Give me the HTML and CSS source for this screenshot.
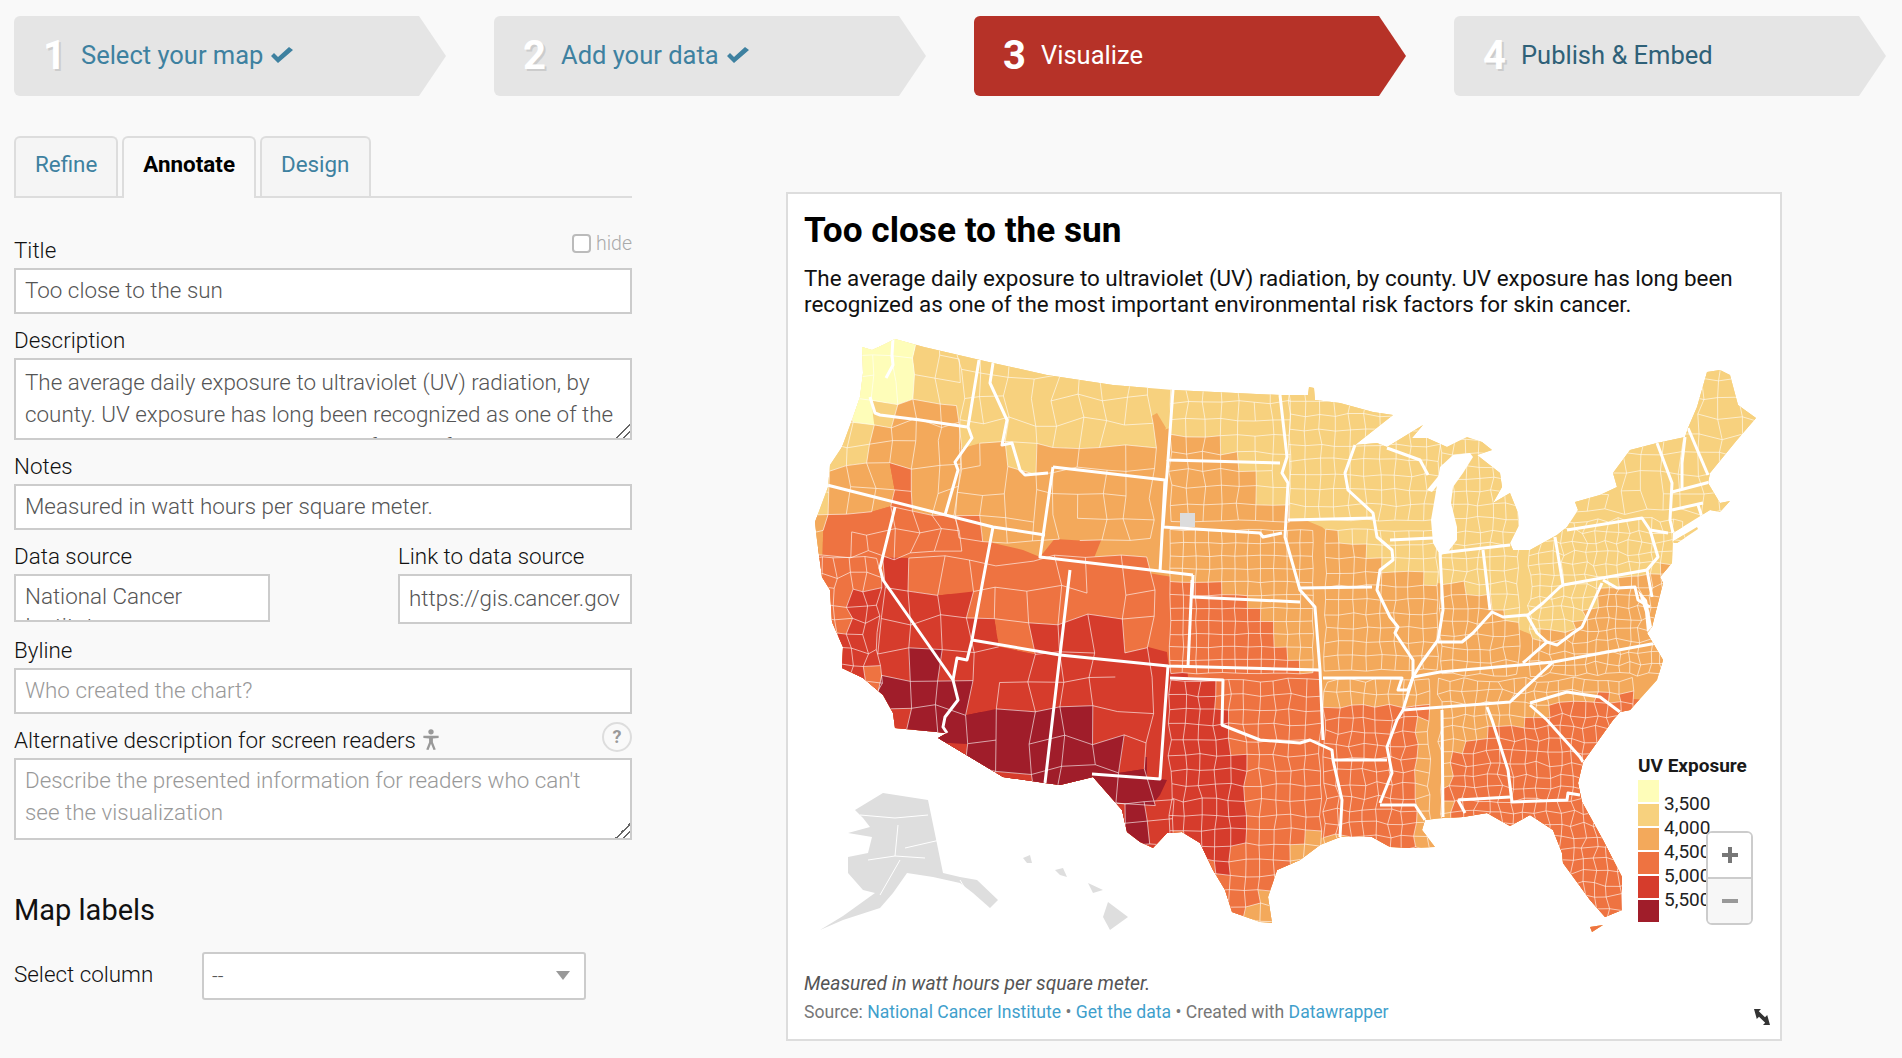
FILE: index.html
```html
<!DOCTYPE html>
<html lang="en">
<head>
    <meta charset="UTF-8">
    <title>Visualize - Too close to the sun</title>
    <link rel="stylesheet" href="styles.css">
</head>
<body>
    <div class="steps">
        <div class="step"><span class="step-num">1</span><span class="step-label">Select your map</span>
            <svg class="check" viewBox="0 0 22 16"><path d="M0 9l3-3 4 4 11-10 4 3-15 13z"/></svg></div>
        <div class="step"><span class="step-num">2</span><span class="step-label">Add your data</span>
            <svg class="check" viewBox="0 0 22 16"><path d="M0 9l3-3 4 4 11-10 4 3-15 13z"/></svg></div>
        <div class="step active"><span class="step-num">3</span><span class="step-label">Visualize</span></div>
        <div class="step next"><span class="step-num">4</span><span class="step-label">Publish &amp; Embed</span></div>
    </div>

    <div class="main">
        <div class="sidebar">
            <div class="tabs">
                <a class="tab">Refine</a>
                <a class="tab active">Annotate</a>
                <a class="tab">Design</a>
            </div>

            <div class="field first">
                <div class="field-head">
                    <label>Title</label>
                    <span class="hide-box"><span class="fake-check"></span>hide</span>
                </div>
                <input type="text" value="Too close to the sun">
            </div>
            <div class="field">
                <label>Description</label>
                <textarea class="desc">The average daily exposure to ultraviolet (UV) radiation, by county. UV exposure has long been recognized as one of the most important environmental risk factors for skin cancer.</textarea>
            </div>
            <div class="field">
                <label>Notes</label>
                <input type="text" value="Measured in watt hours per square meter.">
            </div>
            <div class="field-row">
                <div class="field source">
                    <label>Data source</label>
                    <textarea class="short" readonly>National Cancer Institute</textarea>
                </div>
                <div class="field link">
                    <label>Link to data source</label>
                    <input class="tall" type="text" value="https://gis.cancer.gov">
                </div>
            </div>
            <div class="field">
                <label>Byline</label>
                <input type="text" placeholder="Who created the chart?">
            </div>
            <div class="field">
                <div class="field-head">
                    <label>Alternative description for screen readers
                        <svg class="a11y" viewBox="0 0 16 22"><circle cx="8" cy="3" r="2.8"/><path d="M0 7h16v2.400l-6 .6v4l3 7.500-2.400.5-2.600-6.500-2.600 6.500-2.400-.5 3-7.500v-4l-6-.6z"/></svg>
                    </label>
                    <span class="help">?</span>
                </div>
                <textarea placeholder="Describe the presented information for readers who can't see the visualization"></textarea>
            </div>

            <h3 class="section-title">Map labels</h3>
            <div class="select-row">
                <label>Select column</label>
                <div class="select-wrap">
                    <select><option>--</option></select>
                </div>
            </div>
        </div>

        <div class="chart">
            <h1 class="chart-title">Too close to the sun</h1>
            <p class="chart-desc">The average daily exposure to ultraviolet (UV) radiation, by county. UV exposure has long been recognized as one of the most important environmental risk factors for skin cancer.</p>

            <svg class="map" viewBox="805 330 960 620">
                <defs>
                    <clipPath id="land">
                        <polygon points="862,347 872,350 883,345 895,339 924,347 980,360 993,363 1047,375 1113,385 1173,390 1280,395 1308,395 1309,387 1314,388 1315,400 1340,403 1373,412 1393,415 1355,445 1377,443 1387,447 1423,425 1412,438 1427,438 1447,447 1467,437 1482,442 1492,450 1477,455 1500,473 1502,487 1493,503 1510,493 1518,513 1519,525 1510,543 1513,550 1530,550 1557,535 1567,527 1578,510 1575,502 1600,495 1617,487 1613,473 1630,450 1657,443 1685,437 1688,428 1697,407 1707,372 1720,370 1730,375 1738,405 1756,418 1737,440 1710,473 1708,483 1720,503 1730,501 1720,512 1710,510 1673,533 1672,563 1660,577 1663,583 1652,627 1647,633 1663,660 1657,680 1630,710 1620,712 1613,720 1583,762 1578,783 1582,802 1603,840 1622,877 1622,910 1605,917 1590,900 1563,863 1562,853 1553,830 1530,815 1510,826 1487,813 1463,817 1443,818 1425,820 1422,830 1435,847 1410,848 1390,847 1372,837 1340,837 1320,845 1300,860 1277,870 1268,897 1272,923 1260,922 1232,912 1225,890 1213,870 1200,843 1182,832 1167,833 1153,848 1140,842 1127,832 1122,810 1093,777 1060,785 1045,783 1003,777 963,753 938,738 947,733 895,728 893,713 883,695 863,678 842,668 843,647 832,622 830,590 822,577 817,540 815,522 828,487 830,465 842,447 852,420 860,397 863,373"/>
                        <polygon points="1670,543 1697,527 1698,529 1677,543"/>
                        <polygon points="1590,927 1603,925 1592,932"/>
                    </clipPath>
                </defs>

                <g id="bands" clip-path="url(#land)">
                    <rect class="uv-4000" x="805" y="330" width="960" height="620"/>
                    <polygon class="uv-3500" points="850,340 895,335 920,350 900,407 890,400 875,413 853,422"/>
                    <polygon class="uv-4500" points="842,445 860,460 870,463 877,440 893,410 923,403 950,410 967,427 970,443 993,450 997,463 1013,467 1033,447 1057,440 1093,433 1140,437 1170,428 1223,447 1233,460 1250,463 1253,480 1263,500 1280,503 1286,513 1303,513 1305,520 1322,527 1337,540 1357,548 1380,567 1410,570 1437,583 1470,588 1483,597 1493,610 1513,627 1537,637 1547,633 1570,630 1583,617 1600,587 1630,577 1670,567 1700,570 1700,950 805,950 805,530 835,495 848,500 835,470"/>
                    <polygon class="uv-4500" points="1150,417 1157,413 1166,428 1160,438 1150,435"/>
                    <polygon class="uv-5000" points="810,557 840,520 852,508 870,500 910,505 943,515 993,527 993,543 1023,550 1040,557 1092,563 1160,575 1192,580 1252,600 1260,613 1270,623 1277,647 1287,657 1300,668 1320,672 1323,700 1360,707 1403,703 1423,713 1420,720 1418,813 1418,850 1300,835 1290,870 1200,950 805,950"/>
                    <polygon class="uv-5000" points="1455,830 1447,793 1457,760 1467,750 1477,740 1493,720 1507,727 1530,717 1543,713 1563,703 1597,697 1650,700 1650,950 1455,950"/>
                    <polygon class="uv-5000" points="880,473 887,463 907,470 903,488 910,490 908,505 883,500 887,482"/>
                    <polygon class="uv-5000" points="1040,557 1060,532 1102,538 1092,563 1058,557"/>
                    <polygon class="uv-4500" points="1113,575 1140,575 1140,590 1125,602 1117,595"/>
                    <polygon class="uv-4500" points="1297,843 1318,836 1320,845 1295,870 1285,860"/>
                    <polygon class="uv-5500" points="917,580 963,600 960,613 977,615 1003,618 993,638 1030,645 1048,627 1064,618 1083,620 1090,627 1133,643 1167,652 1169,668 1187,668 1188,677 1222,680 1222,723 1233,737 1230,760 1247,763 1240,783 1248,810 1240,840 1228,853 1228,873 1213,873 1200,847 1183,833 1153,850 800,880 840,680 837,638 857,623 843,600 867,580"/>
                    <polygon class="uv-5000" points="863,668 877,667 877,687 870,688"/>
                    <polygon class="uv-5500" points="887,560 895,558 900,580 885,585"/>
                    <polygon class="uv-6000" points="902,653 938,660 953,680 958,698 947,702 915,697 893,693"/>
                    <polygon class="uv-6000" points="917,713 943,717 943,732 915,730"/>
                    <polygon class="uv-6000" points="938,637 970,642 965,658 955,658 953,678 938,660"/>
                    <polygon class="uv-6000" points="930,745 948,717 953,703 970,702 973,710 993,715 1005,705 1020,710 1033,720 1033,732 1048,727 1053,712 1077,710 1093,702 1107,710 1102,717 1110,725 1127,723 1130,733 1127,757 1147,757 1147,777 1167,780 1160,795 1148,810 1142,815 1141,842 1127,832 1120,810 1093,777 1060,790 1045,790 1003,780 960,755"/>
                </g>

                <g id="counties" clip-path="url(#land)"></g>
                <polygon class="no-data" points="1180,513 1195,513 1195,527 1180,527"/>

                <g class="states" clip-path="url(#land)">
                    <polyline points="893,338 892,355 893,365 886,378"/>
                    <polyline points="870,397 875,413 880,415 920,420 967,427"/>
                    <polyline points="979,360 968,427 972,438 955,462 958,470 945,515"/>
                    <polyline points="993,363 990,383 1007,420 1002,445 1012,443 1020,470 1025,475 1048,473"/>
                    <polyline points="1053,467 1165,480 1160,572"/>
                    <polyline points="1053,467 1040,557 1193,575"/>
                    <polyline points="1173,390 1168,460 1280,463"/>
                    <polyline points="1168,460 1163,527 1260,533 1263,537 1282,533"/>
                    <polyline points="827,485 993,527 1045,535"/>
                    <polyline points="993,527 983,580 972,640 967,660 957,658 953,680"/>
                    <polyline points="895,507 880,568 883,580 953,680 958,700 945,717 943,727 947,733"/>
                    <polyline points="972,640 1060,655 1168,666 1320,670"/>
                    <polyline points="1193,575 1192,597 1300,602"/>
                    <polyline points="1192,580 1188,667"/>
                    <polyline points="1070,570 1060,655 1045,783"/>
                    <polyline points="1170,678 1223,680 1222,725 1260,740 1300,743 1310,740 1332,750 1333,760 1342,800 1340,837"/>
                    <polyline points="1168,666 1160,779 1092,774"/>
                    <polyline points="1280,395 1287,457 1282,473 1288,483 1285,537 1300,590 1315,607 1320,670 1323,740"/>
                    <polyline points="1288,520 1373,518"/>
                    <polyline points="1355,445 1345,473 1348,490 1373,513 1377,537 1392,550 1393,560 1380,570 1377,590 1390,617 1398,627 1395,633 1413,660 1413,677 1403,710 1397,720 1387,747 1392,773 1380,803"/>
                    <polyline points="1300,588 1372,587"/>
                    <polyline points="1390,540 1433,538"/>
                    <polyline points="1387,448 1420,460 1428,475"/>
                    <polyline points="1440,553 1443,610 1438,640 1422,662 1413,677"/>
                    <polyline points="1440,553 1510,545"/>
                    <polyline points="1483,550 1490,610"/>
                    <polyline points="1555,537 1563,585 1647,570"/>
                    <polyline points="1438,642 1462,642 1473,633 1492,612 1503,617 1527,615 1537,633 1547,642 1523,663"/>
                    <polyline points="1528,615 1543,603 1560,587 1563,585"/>
                    <polyline points="1567,530 1642,518 1650,530 1668,533"/>
                    <polyline points="1650,530 1658,557 1647,570 1652,597"/>
                    <polyline points="1603,580 1617,588 1635,587 1638,600 1650,607"/>
                    <polyline points="1602,583 1582,627 1573,633 1557,645 1547,642"/>
                    <polyline points="1657,643 1553,662 1520,665 1440,672 1413,677"/>
                    <polyline points="1553,662 1510,702 1403,710"/>
                    <polyline points="1530,703 1567,692 1600,697 1620,712"/>
                    <polyline points="1530,705 1547,720 1580,757 1583,762"/>
                    <polyline points="1487,707 1492,720 1508,770 1512,802 1567,800 1568,793 1580,795"/>
                    <polyline points="1458,800 1510,797"/>
                    <polyline points="1458,800 1465,813"/>
                    <polyline points="1442,710 1443,817"/>
                    <polyline points="1380,805 1415,805 1425,820"/>
                    <polyline points="1333,760 1387,760"/>
                    <polyline points="1323,678 1402,678 1398,690 1408,690 1413,677"/>
                    <polyline points="1657,443 1672,483 1670,520 1673,533"/>
                    <polyline points="1685,437 1682,463 1682,488"/>
                    <polyline points="1688,428 1708,475"/>
                    <polyline points="1672,492 1710,482"/>
                    <polyline points="1672,510 1703,503"/>
                    <polyline points="1698,505 1702,517"/>
                </g>

                <polygon class="water" points="1453,455 1470,453 1473,457 1463,473 1453,487 1451,503 1457,527 1457,540 1447,553 1440,555 1433,543 1431,520 1435,497 1440,467"/>
                <polygon class="water" points="1427,490 1445,468 1442,480 1432,492"/>
                <polygon class="water" points="1638,590 1645,612 1647,632 1652,627 1647,600"/>

                <g class="outlying">
                    <polygon points="855,810 883,793 928,800 943,873 960,877 977,880 998,900 990,908 973,893 960,883 933,877 907,873 893,893 880,908 843,920 820,930 843,916 875,893 863,890 848,873 848,857 868,853 872,837 848,833 870,827 863,818"/>
                    <polygon points="1108,902 1128,917 1110,930 1103,917"/>
                    <polygon points="1088,883 1103,890 1093,893"/>
                    <polygon points="1055,870 1063,868 1067,877 1060,875"/>
                    <polygon points="1023,858 1030,855 1032,863 1027,863"/>
                    <polyline class="outlying-line" points="860,815 895,818 928,815"/>
                    <polyline class="outlying-line" points="868,860 895,856 898,825"/>
                    <polyline class="outlying-line" points="895,856 925,858"/>
                    <polyline class="outlying-line" points="880,895 900,860"/>
                    <polyline class="outlying-line" points="905,848 940,840"/>
                    <polyline class="outlying-line" points="960,880 975,905"/>
                </g>
            </svg>

            <div class="legend">
                <div class="legend-title">UV Exposure</div>
                <div class="legend-body">
                    <div class="swatches">
                        <span class="swatch s1"></span>
                        <span class="swatch s2"></span>
                        <span class="swatch s3"></span>
                        <span class="swatch s4"></span>
                        <span class="swatch s5"></span>
                        <span class="swatch s6"></span>
                    </div>
                    <div class="legend-labels">
                        <span>3,500</span>
                        <span>4,000</span>
                        <span>4,500</span>
                        <span>5,000</span>
                        <span>5,500</span>
                    </div>
                </div>
            </div>

            <div class="zoom">
                <div class="zoom-btn"><svg viewBox="0 0 16 16"><path d="M6 0h4v6h6v4h-6v6h-4v-6h-6v-4h6z"/></svg></div>
                <div class="zoom-btn out"><svg viewBox="0 0 16 16"><path d="M0 6h16v4h-16z"/></svg></div>
            </div>

            <p class="chart-notes">Measured in watt hours per square meter.</p>
            <p class="chart-source">Source: <a>National Cancer Institute</a> • <a>Get the data</a> • Created with <a>Datawrapper</a></p>

            <svg class="expand" viewBox="0 0 16 16"><path d="M0 0h7l-2.200 2.200 6.200 6 2.200-2.200 2.800 10h-7l2.200-2.200-6.200-6-2.200 2.200z"/></svg>
        </div>
    </div>

    <script src="map.js"></script>
</body>
</html>
```

FILE: styles.css
```css
* {
    box-sizing: border-box;
}
body {
    margin: 0;
    padding: 16px 16px 0 14px;
    background-color: #f9f9f9;
    color: #222;
    font-family: Roboto, "Liberation Sans", sans-serif;
}

/* Steps */
.steps {
    display: flex;
    gap: 48px;
}
.step {
    flex: 1;
    height: 80px;
    display: flex;
    align-items: center;
    padding: 0 0 2px 29px;
    background: #e5e5e5;
    border-radius: 6px;
    clip-path: polygon(0 0, calc(100% - 27px) 0, 100% 50%, calc(100% - 27px) 100%, 0 100%);
}
.step-num {
    width: 38px;
    font-size: 40px;
    font-weight: 700;
    color: #fff;
    text-shadow: 2px 2px 0 #ccc;
}
.step-label {
    font-size: 25.5px;
    color: #3e81a0;
}
.check {
    width: 22px;
    height: 16px;
    margin-left: 8px;
    fill: #3e81a0;
}
.step.active {
    background: #b63228;
}
.step.active .step-num {
    text-shadow: none;
}
.step.active .step-label {
    color: #fff;
}
.step.next .step-label {
    color: #2f6178;
}

/* Layout */
.main {
    display: flex;
    margin-top: 40px;
}
.sidebar {
    width: 618px;
    flex: none;
}

/* Tabs */
.tabs {
    display: flex;
    gap: 4px;
    height: 62px;
    border-bottom: 2px solid #ddd;
}
.tab {
    height: 60px;
    padding: 0 19px 6px;
    display: flex;
    align-items: center;
    font-size: 22.4px;
    color: #3e81a0;
    background: #f5f5f5;
    border: 2px solid #ddd;
    border-bottom: none;
    border-radius: 6px 6px 0 0;
}
.tab.active {
    height: 62px;
    padding-bottom: 8px;
    font-weight: 700;
    color: #000;
    background: #f9f9f9;
}

/* Form */
.field {
    margin-top: 13px;
}
.field.first {
    margin-top: 39px;
}
.field label {
    display: block;
    height: 26px;
    line-height: 27px;
    margin-bottom: 5px;
}
label {
    font-size: 22.4px;
    font-weight: 300;
    color: #111;
}
.field-head {
    display: flex;
    justify-content: space-between;
}
input, textarea, select {
    display: block;
    width: 100%;
    font-family: Roboto, "Liberation Sans", sans-serif;
    font-size: 22.4px;
    font-weight: 300;
    color: #555;
    background: #fff;
    border: 2px solid #ccc;
    border-radius: 0;
    outline: none;
}
input {
    height: 46px;
    padding: 0 9px 2px;
}
textarea {
    height: 82px;
    padding: 4px 12px 5px 9px;
    line-height: 32px;
    overflow: hidden;
    resize: vertical;
}
textarea::-webkit-resizer {
    background: linear-gradient(135deg, transparent 0 50%, #666 50% 57%, transparent 57% 75%, #666 75% 82%, transparent 82%);
}
textarea.desc {
    padding-top: 6px;
}
input::placeholder, textarea::placeholder {
    color: #999;
}
.field-row {
    display: flex;
    justify-content: space-between;
}
.source {
    width: 256px;
}
.link {
    width: 234px;
}
textarea.short {
    height: 48px;
    padding-top: 5px;
    line-height: 30px;
    resize: none;
}
input.tall {
    height: 50px;
}
.hide-box {
    display: flex;
    align-items: flex-start;
    gap: 5px;
    margin-top: -5px;
    font-size: 19.5px;
    font-weight: 300;
    color: #aaa;
}
.fake-check {
    width: 19px;
    height: 19px;
    margin-top: 2px;
    background: #fff;
    border: 2px solid #bbb;
    border-radius: 4px;
}
.a11y {
    width: 16px;
    height: 21px;
    margin-left: 2px;
    vertical-align: -2px;
    fill: #999;
}
.help {
    width: 30px;
    height: 30px;
    margin-top: -5px;
    border: 2px solid #ddd;
    border-radius: 50%;
    text-align: center;
    font-size: 18px;
    line-height: 25px;
    font-weight: 700;
    color: #999;
}
.section-title {
    margin: 54px 0 0;
    height: 33px;
    line-height: 32px;
    font-size: 29px;
    font-weight: 400;
    color: #111;
}
.select-row {
    display: flex;
    align-items: center;
    margin-top: 25px;
}
.select-row label {
    width: 188px;
    margin-bottom: 5px;
}
.select-wrap {
    position: relative;
    width: 384px;
}
.select-wrap::after {
    content: "";
    position: absolute;
    top: 19px;
    right: 16px;
    border-top: 9px solid #999;
    border-left: 7px solid transparent;
    border-right: 7px solid transparent;
}
select {
    height: 48px;
    padding: 0 8px;
    font-size: 20px;
    border-radius: 3px;
    appearance: none;
}

/* Chart */
.chart {
    position: relative;
    width: 996px;
    height: 849px;
    margin: 56px 0 0 154px;
    padding: 16px 0 0 16px;
    background: #fff;
    border: 2px solid #ddd;
    flex: none;
}
.chart-title {
    margin: 0;
    height: 40px;
    line-height: 40px;
    font-size: 35.2px;
    font-weight: 700;
    color: #000;
}
.chart-desc {
    margin: 15px 0 0;
    width: 950px;
    font-size: 22.4px;
    line-height: 26px;
    color: #111;
}
.map {
    display: block;
    width: 960px;
    height: 620px;
    margin: 13px 0 0 1px;
}
.uv-3500 { fill: #fefdb9; }
.uv-4000 { fill: #f7d17e; }
.uv-4500 { fill: #f3a95b; }
.uv-5000 { fill: #ee7341; }
.uv-5500 { fill: #d63c2c; }
.uv-6000 { fill: #a01d2a; }
.no-data { fill: #dcdcdc; }
.water { fill: #fff; }
.counties-line {
    fill: none;
    stroke: #fff;
    stroke-opacity: 0.6;
    stroke-width: 1;
}
.states polyline {
    fill: none;
    stroke: #fff;
    stroke-width: 3;
    stroke-linejoin: round;
}
.outlying polygon {
    fill: #dedede;
}
.outlying .outlying-line {
    fill: none;
    stroke: #fff;
    stroke-width: 1;
}

/* Legend lies on the map */
.legend {
    position: absolute;
    left: 850px;
    top: 560px;
}
.legend-title {
    height: 26px;
    line-height: 24px;
    font-size: 19px;
    font-weight: 700;
    color: #1a1a1a;
}
.legend-body {
    display: flex;
    gap: 5px;
}
.swatches {
    display: flex;
    flex-direction: column;
    gap: 2px;
}
.swatch {
    display: block;
    width: 21px;
    height: 22px;
}
.s1 { background: #fefdb9; }
.s2 { background: #f7d17e; }
.s3 { background: #f3a95b; }
.s4 { background: #ee7341; }
.s5 { background: #d63c2c; }
.s6 { background: #a01d2a; }
.legend-labels {
    display: flex;
    flex-direction: column;
    padding-top: 12px;
    font-size: 19px;
    line-height: 24px;
    color: #222;
}

/* Zoom control */
.zoom {
    position: absolute;
    left: 918px;
    top: 637px;
    width: 47px;
    height: 94px;
    border: 2px solid #ccc;
    border-radius: 6px;
    overflow: hidden;
}
.zoom-btn {
    height: 44px;
    display: flex;
    align-items: center;
    justify-content: center;
    background: #fff;
}
.zoom-btn svg {
    width: 16px;
    height: 16px;
    fill: #777;
}
.zoom-btn.out {
    height: 46px;
    background: #f7f7f7;
    border-top: 2px solid #ccc;
}
.zoom-btn.out svg {
    fill: #999;
}

/* Footer */
.chart-notes {
    margin: 21px 0 0;
    height: 26px;
    line-height: 26px;
    font-size: 19.3px;
    font-style: italic;
    color: #555;
}
.chart-source {
    margin: 2px 0 0;
    height: 26px;
    line-height: 26px;
    font-size: 17.6px;
    color: #777;
}
.chart-source a {
    color: #3f9fcc;
}
.expand {
    position: absolute;
    right: 10px;
    bottom: 14px;
    width: 16px;
    height: 16px;
    fill: #333;
}
```

FILE: map.js
```js
// county mesh: jittered grids, one zone per part of the map
// each cell takes its colour from the band under its centre, so band edges follow counties
var zones = [
    // x0, y0, x1, y1, cell, jitter, chance an edge is left out
    [805, 335, 960, 560, 22, 5, 0.12],
    [960, 350, 1170, 560, 24, 5, 0.15],
    [805, 560, 880, 700, 15, 4, 0.05],
    [880, 560, 1170, 800, 30, 6, 0.15],
    [1060, 800, 1170, 860, 22, 4, 0],
    [1170, 385, 1290, 530, 17, 2, 0.05],
    [1170, 530, 1325, 680, 13, 0.8, 0],
    [1170, 680, 1325, 930, 15, 2.2, 0],
    [1290, 385, 1440, 530, 15, 2, 0],
    [1325, 530, 1440, 680, 14, 1.5, 0],
    [1325, 680, 1440, 850, 13, 2.5, 0],
    [1440, 440, 1530, 680, 13, 2.2, 0],
    [1530, 520, 1690, 680, 11, 2.8, 0],
    [1440, 680, 1640, 930, 12, 2.8, 0],
    [1530, 360, 1760, 520, 19, 4, 0.08]
];

var seed = 4711;
function rnd() {
    seed = (seed * 16807) % 2147483647;
    return seed / 2147483647;
}

var svg = document.querySelector('.map');
var counties = document.getElementById('counties');
var bands = [].slice.call(document.querySelectorAll('#bands > *')).reverse();
var point = svg.createSVGPoint();

function bandAt(x, y) {
    point.x = x;
    point.y = y;
    for (var i = 0; i < bands.length; i++) {
        if (bands[i].isPointInFill(point)) return bands[i].getAttribute('class');
    }
}

function addPath(cls, d) {
    var path = document.createElementNS('http://www.w3.org/2000/svg', 'path');
    path.setAttribute('class', cls);
    path.setAttribute('d', d);
    counties.appendChild(path);
}

var fills = {};
var lines = '';

zones.forEach(function (z) {
    var rows = [];
    for (var y = z[1]; y <= z[3]; y += z[4]) {
        var row = [];
        for (var x = z[0]; x <= z[2]; x += z[4]) {
            row.push([
                +(x + (rnd() - 0.5) * 2 * z[5]).toFixed(1),
                +(y + (rnd() - 0.5) * 2 * z[5]).toFixed(1)
            ]);
        }
        rows.push(row);
    }
    for (var i = 0; i < rows.length; i++) {
        for (var j = 0; j < rows[i].length; j++) {
            var p = rows[i][j];
            if (j + 1 < rows[i].length && rnd() > z[6]) {
                lines += 'M' + p + 'L' + rows[i][j + 1];
            }
            if (i + 1 < rows.length && rnd() > z[6]) {
                lines += 'M' + p + 'L' + rows[i + 1][j];
            }
            if (i + 1 < rows.length && j + 1 < rows[i].length) {
                var q = rows[i][j + 1], r = rows[i + 1][j + 1], s = rows[i + 1][j];
                var band = bandAt((p[0] + r[0]) / 2, (p[1] + r[1]) / 2);
                fills[band] = (fills[band] || '') + 'M' + p + 'L' + q + 'L' + r + 'L' + s + 'Z';
            }
        }
    }
});

Object.keys(fills).forEach(function (band) {
    addPath(band, fills[band]);
});
addPath('counties-line', lines);
```
